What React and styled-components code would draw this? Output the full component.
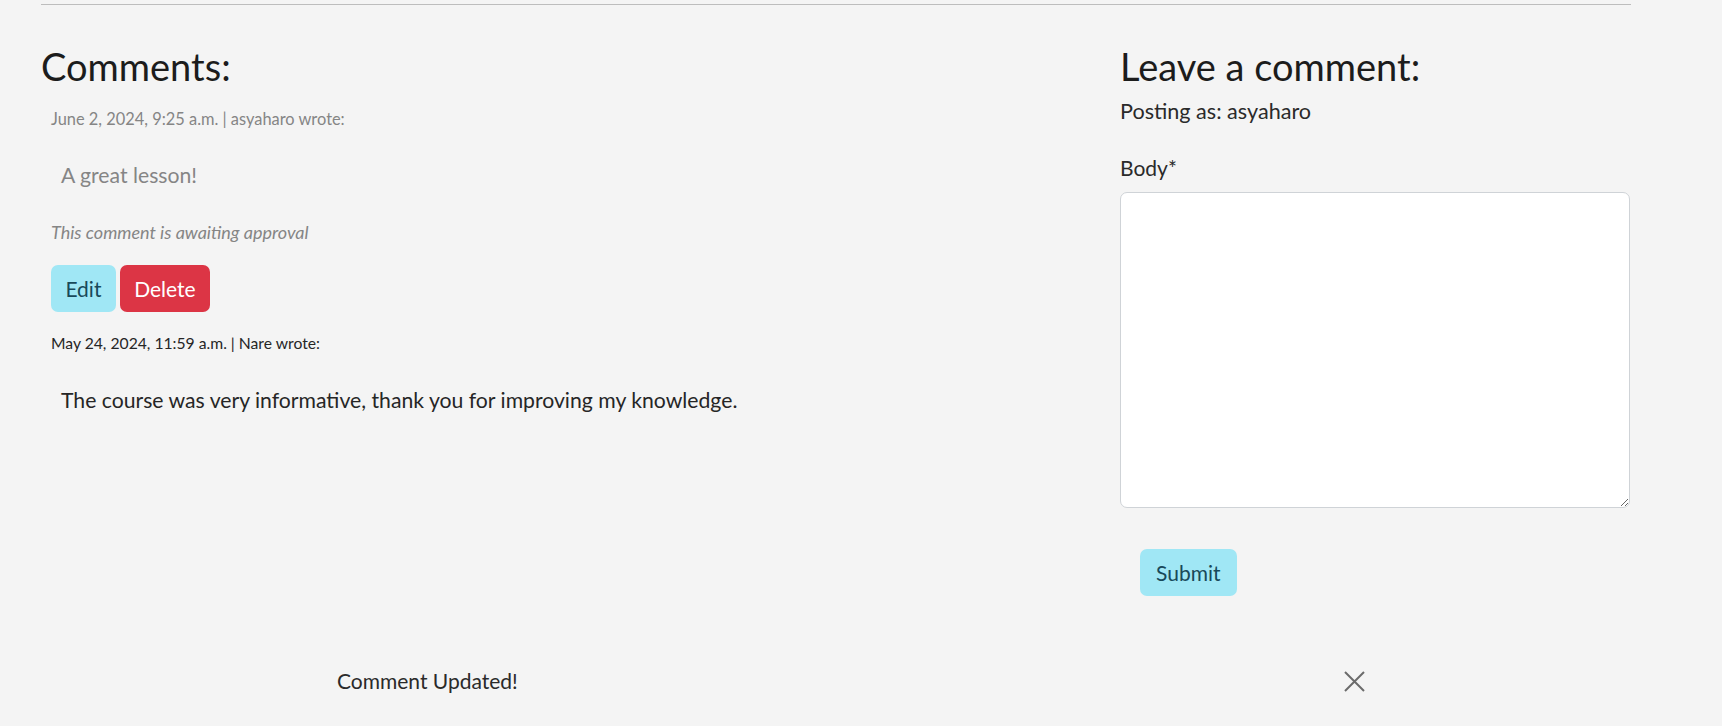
import React from "react";
import styled, { createGlobalStyle } from "styled-components";

const Global = createGlobalStyle`
  html, body { margin: 0; padding: 0; background: #f4f4f4; }
  body {
    font-family: Lato, "Open Sans", sans-serif;
    color: #212529;
    font-size: 21px;
    line-height: 1.5;
  }
  * { box-sizing: border-box; }
`;

const Page = styled.div`
  width: 1722px;
  min-height: 726px;
  padding: 4px 91px 0 41px;
`;

const Rule = styled.hr`
  margin: 0;
  border: 0;
  border-top: 1px solid #bdbdbd;
`;

const Columns = styled.div`
  display: grid;
  grid-template-columns: 1052px 510px;
  column-gap: 27px;
  padding-top: 38px;
`;

const Column = styled.section`
  display: flex;
  flex-direction: column;
`;

const Heading = styled.h2`
  margin: 0;
  font-size: 38px;
  line-height: 46px;
  font-weight: 400;
  color: #1c1c1c;
`;

const Comment = styled.article`
  display: flex;
  flex-direction: column;
  padding-left: 10px;
  color: ${(p) => (p.$faded ? "#858585" : "#262626")};
`;

const Meta = styled.p`
  margin: ${(p) => (p.$first ? "18px" : "20px")} 0 0;
  font-size: ${(p) => (p.$first ? "16.4px" : "15.7px")};
  line-height: 23px;
`;

const Body = styled.p`
  margin: 31px 0 0 10px;
  font-size: 21.2px;
  line-height: 29px;
`;

const Note = styled.p`
  margin: 30px 0 0;
  font-size: 18px;
  line-height: 25px;
  font-style: italic;
`;

const Actions = styled.div`
  display: flex;
  gap: 4px;
  margin-top: 20px;
`;

const Button = styled.button`
  font-family: inherit;
  font-size: 21px;
  line-height: 29px;
  height: 47px;
  padding: 0 ${(p) => (p.$wide ? "16px" : "14.4px")};
  border: 0;
  border-radius: 7px;
  cursor: pointer;
  background: ${(p) => (p.$danger ? "#dc3545" : "#a0e7f5")};
  color: ${(p) => (p.$danger ? "#ffffff" : "#18495a")};
`;

const Posting = styled.p`
  margin: 8px 0 0;
  font-size: 21.6px;
  line-height: 29px;
  color: #2a2a2a;
`;

const Label = styled.label`
  margin-top: 27px;
  font-size: 21px;
  line-height: 29px;
  color: #2a2a2a;
`;

const TextArea = styled.textarea`
  margin-top: 10px;
  width: 510px;
  height: 316px;
  background: #ffffff;
  border: 1px solid #cfd3d7;
  border-radius: 7px;
  font-family: inherit;
  font-size: 19.2px;
  padding: 8px 12px;
`;

const SubmitRow = styled.div`
  display: flex;
  padding: 41px 0 0 20px;
`;

const Toast = styled.div`
  display: flex;
  align-items: center;
  justify-content: space-between;
  width: 1028px;
  margin: 65px 0 0 296px;
  height: 40px;
`;

const ToastText = styled.span`
  font-size: 21px;
  color: #2a2a2a;
`;

const Close = styled.button`
  display: flex;
  align-items: center;
  justify-content: center;
  width: 22px;
  height: 22px;
  padding: 0;
  border: 0;
  background: transparent;
  cursor: pointer;
`;

export default function App() {
  return (
    <>
      <Global />
      <Page>
        <Rule />
        <Columns>
          <Column>
            <Heading>Comments:</Heading>
            <Comment $faded>
              <Meta $first>June 2, 2024, 9:25 a.m. | asyaharo wrote:</Meta>
              <Body>A great lesson!</Body>
              <Note>This comment is awaiting approval</Note>
              <Actions>
                <Button>Edit</Button>
                <Button $danger>Delete</Button>
              </Actions>
            </Comment>
            <Comment>
              <Meta>May 24, 2024, 11:59 a.m. | Nare wrote:</Meta>
              <Body>The course was very informative, thank you for improving my knowledge.</Body>
            </Comment>
          </Column>
          <Column>
            <Heading>Leave a comment:</Heading>
            <Posting>Posting as: asyaharo</Posting>
            <Label htmlFor="body">Body*</Label>
            <TextArea id="body" />
            <SubmitRow>
              <Button $wide>Submit</Button>
            </SubmitRow>
          </Column>
        </Columns>
        <Toast>
          <ToastText>Comment Updated!</ToastText>
          <Close aria-label="Close">
            <svg width="21" height="21" viewBox="0 0 21 21">
              <path d="M1 1 L20 20 M20 1 L1 20" stroke="#6b6b6b" strokeWidth="2" fill="none" />
            </svg>
          </Close>
        </Toast>
      </Page>
    </>
  );
}
